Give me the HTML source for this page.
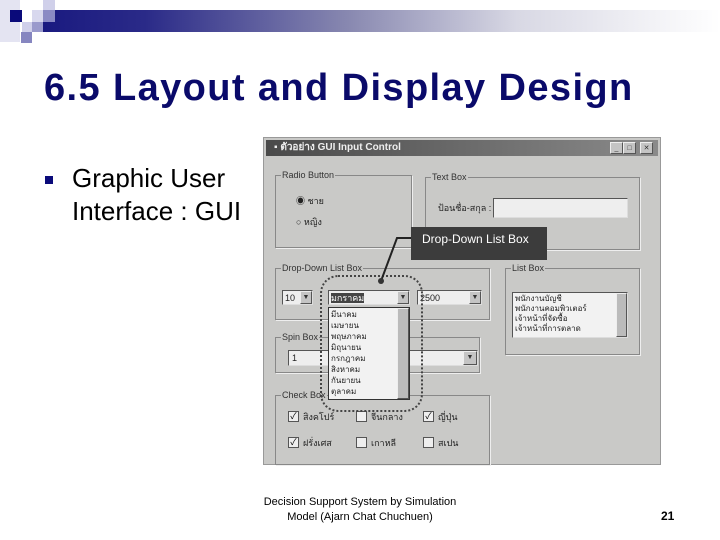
<!DOCTYPE html>
<html><head><meta charset="utf-8"><style>
body{margin:0;width:720px;height:540px;background:#fff;position:relative;overflow:hidden;font-family:"Liberation Sans","Noto Sans CJK SC",sans-serif}
div{position:absolute;box-sizing:border-box}
.g{border:1px solid #888;box-shadow:1px 1px 0 #eee}
.gl{font-size:9px;color:#333;background:#c9c9c7;padding:0 1px;top:-6px;left:5px;line-height:10px}
.in{background:#eee;border:1px solid #555;border-right-color:#ddd;border-bottom-color:#ddd}
.ar{background:#c4c4c4;border:1px solid #eee;border-right-color:#555;border-bottom-color:#555;font-size:7px;text-align:center;line-height:11px;color:#333}
.t{font-size:9px;color:#222;line-height:10px}
.cb{width:11px;height:11px;background:#eee;border:1px solid #555;font-size:9px;line-height:9px;text-align:center}
</style></head><body>
<div style="left:0;top:0;width:20px;height:42px;background:#e4e4f2"></div>
<div style="left:43px;top:10px;width:677px;height:22px;background:linear-gradient(90deg,#1a1a80 0%,#2a2a88 15%,#8888b0 45%,#d8d8e4 70%,#fff 100%)"></div>
<div style="left:10px;top:10px;width:12px;height:12px;background:#0a0a7a"></div>
<div style="left:22px;top:22px;width:10px;height:10px;background:#d0d0ea"></div>
<div style="left:21px;top:32px;width:11px;height:11px;background:#8686c0"></div>
<div style="left:32px;top:10px;width:11px;height:12px;background:#d8d8ee"></div>
<div style="left:43px;top:0;width:12px;height:10px;background:#d0d0ea"></div>
<div style="left:43px;top:10px;width:12px;height:12px;background:#8a8ac4"></div>
<div style="left:32px;top:22px;width:11px;height:10px;background:#9a9acc"></div>
<div style="left:44px;top:66px;font-size:38px;font-weight:bold;color:#0a0a6a;line-height:44px;letter-spacing:1.4px;white-space:nowrap">6.5 Layout and Display Design</div>
<div style="left:45px;top:176px;width:8px;height:8px;background:#0a0a7a"></div>
<div style="left:72px;top:162px;font-size:26px;line-height:33px;color:#000">Graphic User<br>Interface : GUI</div>

<div style="left:263px;top:137px;width:398px;height:328px;background:#c9c9c7;border:1px solid #999">
 <div style="left:2px;top:2px;width:392px;height:16px;background:linear-gradient(90deg,#4a4a4a,#8a8a8a);color:#eee;font-size:10px;font-weight:bold;line-height:16px;padding-left:8px">▪ ตัวอย่าง GUI Input Control</div>
 <div class="ar" style="left:346px;top:4px;width:13px;height:12px">_</div>
 <div class="ar" style="left:359px;top:4px;width:13px;height:12px">□</div>
 <div class="ar" style="left:376px;top:4px;width:13px;height:12px">✕</div>
</div>
<div class="g" style="left:275px;top:175px;width:137px;height:73px"><div class="gl">Radio Button</div>
 <div class="t" style="left:20px;top:20px">◉ ชาย</div><div class="t" style="left:20px;top:41px">○ หญิง</div></div>
<div class="g" style="left:425px;top:177px;width:215px;height:73px"><div class="gl">Text Box</div>
 <div class="t" style="left:12px;top:25px">ป้อนชื่อ-สกุล :</div>
 <div class="in" style="left:67px;top:20px;width:135px;height:20px"></div></div>
<div class="g" style="left:275px;top:268px;width:215px;height:52px"><div class="gl">Drop-Down List Box</div></div>
<div class="g" style="left:505px;top:268px;width:135px;height:87px"><div class="gl">List Box</div>
 <div class="in" style="left:6px;top:23px;width:116px;height:46px;background:#f2f2f2"><div class="t" style="left:2px;top:1px;font-size:8px">พนักงานบัญชี<br>พนักงานคอมพิวเตอร์<br>เจ้าหน้าที่จัดซื้อ<br>เจ้าหน้าที่การตลาด</div><div class="ar" style="right:0;top:0;width:11px;height:44px;background:#bbb"></div></div></div>
<div class="g" style="left:275px;top:337px;width:205px;height:36px"><div class="gl">Spin Box</div>
 <div class="in" style="left:12px;top:12px;width:190px;height:16px"><div class="t" style="left:3px;top:2px">1</div><div class="ar" style="right:0;top:0;width:14px;height:14px">▼</div></div></div>
<div class="g" style="left:275px;top:395px;width:215px;height:70px"><div class="gl">Check Box</div>
 <div class="cb" style="left:12px;top:15px">✓</div><div class="t" style="left:27px;top:16px">สิงคโปร์</div>
 <div class="cb" style="left:80px;top:15px"></div><div class="t" style="left:95px;top:16px">จีนกลาง</div>
 <div class="cb" style="left:147px;top:15px">✓</div><div class="t" style="left:162px;top:16px">ญี่ปุ่น</div>
 <div class="cb" style="left:12px;top:41px">✓</div><div class="t" style="left:27px;top:42px">ฝรั่งเศส</div>
 <div class="cb" style="left:80px;top:41px"></div><div class="t" style="left:95px;top:42px">เกาหลี</div>
 <div class="cb" style="left:147px;top:41px"></div><div class="t" style="left:162px;top:42px">สเปน</div></div>
<div class="in" style="left:282px;top:290px;width:31px;height:15px"><div class="t" style="left:2px;top:2px">10</div><div class="ar" style="right:0;top:0;width:12px;height:13px">▼</div></div>
<div class="in" style="left:417px;top:290px;width:65px;height:15px"><div class="t" style="left:2px;top:2px">2500</div><div class="ar" style="right:0;top:0;width:12px;height:13px">▼</div></div>
<div class="in" style="left:328px;top:290px;width:82px;height:15px"><div class="t" style="left:2px;top:2px;background:#444;color:#fff">มกราคม</div><div class="ar" style="right:0;top:0;width:12px;height:13px">▼</div></div>
<div style="left:328px;top:307px;width:82px;height:93px;background:#f2f2f2;border:1px solid #333"><div class="t" style="left:2px;top:1px;font-size:8px;line-height:11px">มีนาคม<br>เมษายน<br>พฤษภาคม<br>มิถุนายน<br>กรกฎาคม<br>สิงหาคม<br>กันยายน<br>ตุลาคม</div><div class="ar" style="right:0;top:0;width:12px;height:91px;background:#bbb"></div></div>
<div style="left:320px;top:275px;width:103px;height:137px;border:2px dotted #444;border-radius:18px"></div>
<div style="left:411px;top:227px;width:136px;height:33px;background:#3c3c3c;color:#fff;font-size:12px;line-height:25px;padding-left:11px">Drop-Down List Box</div>
<svg style="position:absolute;left:0;top:0" width="720" height="540"><polyline points="411,238 397,238 381,281" fill="none" stroke="#222" stroke-width="2"/><circle cx="381" cy="281" r="3" fill="#333"/></svg>
<div style="left:250px;top:495px;width:220px;text-align:center;font-size:11px;line-height:15px;color:#000">Decision Support System by Simulation<br>Model (Ajarn Chat Chuchuen)</div>
<div style="left:661px;top:509px;font-size:12px;font-weight:bold">21</div>
</body></html>
